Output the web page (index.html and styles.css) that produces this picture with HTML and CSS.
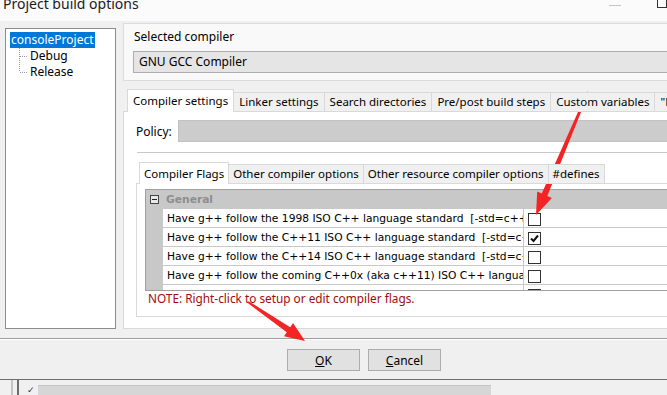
FILE: index.html
```html
<!DOCTYPE html>
<html lang="en">

<head>
    <meta charset="UTF-8">
    <meta name="viewport" content="width=device-width, initial-scale=1.0">
    <link rel="stylesheet" href="styles.css">
    <title>Project build options</title>
</head>

<body>

    <div class="titlebar">
        <span class="title">Project build options</span>
        <span class="win-min"></span>
        <span class="win-max"></span>
    </div>

    <div class="dialog-body">
        <div class="tree">
            <span class="tree-root">consoleProject</span>
            <div class="tree-children">
                <svg class="tree-lines" width="20" height="33" viewBox="0 0 20 33">
                    <path d="M9.5 0 V24 M10 8.5 H18 M10 24.5 H18" stroke="#9a9a9a" stroke-width="1" stroke-dasharray="1 1" fill="none"/>
                </svg>
                <div>
                    <div class="tree-child">Debug</div>
                    <div class="tree-child">Release</div>
                </div>
            </div>
        </div>

        <div class="right">
            <div class="compiler-box">
                <div class="box-label">Selected compiler</div>
                <div class="combo">GNU GCC Compiler</div>
            </div>

            <div class="notebook">
                <div class="tabs">
                    <div class="tab active">Compiler settings</div>
                    <div class="tab">Linker settings</div>
                    <div class="tab">Search directories</div>
                    <div class="tab">Pre/post build steps</div>
                    <div class="tab">Custom variables</div>
                    <div class="tab">"Make" commands</div>
                </div>
                <div class="page">
                    <div class="policy-row">
                        <span class="policy-label">Policy:</span>
                        <div class="policy-combo"></div>
                    </div>
                    <div class="sep"></div>

                    <div class="inner-notebook">
                        <div class="tabs inner">
                            <div class="tab active">Compiler Flags</div>
                            <div class="tab">Other compiler options</div>
                            <div class="tab">Other resource compiler options</div>
                            <div class="tab">#defines</div>
                        </div>
                        <div class="inner-page">
                            <div class="grid">
                                <div class="grid-cat">
                                    <svg width="9" height="9" viewBox="0 0 9 9">
                                        <rect x="0.5" y="0.5" width="8" height="8" fill="#e8e8e8" stroke="#444"/>
                                        <path d="M2 4.5 H7" stroke="#222" stroke-width="1"/>
                                    </svg>
                                    <span class="cat-label">General</span>
                                </div>
                                <div class="grid-row">
                                    <div class="gutter"></div>
                                    <div class="name">Have g++ follow the 1998 ISO C++ language standard  [-std=c++98]</div>
                                    <div class="value"><span class="check"></span></div>
                                </div>
                                <div class="grid-row">
                                    <div class="gutter"></div>
                                    <div class="name">Have g++ follow the C++11 ISO C++ language standard  [-std=c++11]</div>
                                    <div class="value">
                                        <span class="check">
                                            <svg width="11" height="11" viewBox="0 0 11 11">
                                                <path d="M2 5.5 L4.5 8 L9 2.5" stroke="#111" stroke-width="2" fill="none"/>
                                            </svg>
                                        </span>
                                    </div>
                                </div>
                                <div class="grid-row">
                                    <div class="gutter"></div>
                                    <div class="name">Have g++ follow the C++14 ISO C++ language standard  [-std=c++14]</div>
                                    <div class="value"><span class="check"></span></div>
                                </div>
                                <div class="grid-row">
                                    <div class="gutter"></div>
                                    <div class="name">Have g++ follow the coming C++0x (aka c++11) ISO C++ language standard</div>
                                    <div class="value"><span class="check"></span></div>
                                </div>
                                <div class="grid-row">
                                    <div class="gutter"></div>
                                    <div class="name"></div>
                                    <div class="value"><span class="check"></span></div>
                                </div>
                            </div>
                            <div class="note">NOTE: Right-click to setup or edit compiler flags.</div>
                        </div>
                    </div>
                </div>
            </div>
        </div>
    </div>

    <div class="footer">
        <div class="btn"><u>O</u>K</div>
        <div class="btn"><u>C</u>ancel</div>
    </div>

    <div class="ide">
        <span class="ide-line light"></span>
        <span class="ide-line dark"></span>
        <span class="ide-check">&#10003;</span>
        <span class="ide-bar"></span>
    </div>

    <!-- red arrows drawn over the screenshot -->
    <svg class="arrows" width="667" height="395" viewBox="0 0 667 395">
        <polygon points="588.9,92.4 547.3,195.9 551.9,197.9 536,215 537.2,191.6 541.8,193.6 587.1,91.6" fill="#f22424"/>
        <polygon points="247.4,302.8 286.8,332.2 284,336.3 305,341 293,323.1 290.2,327.2 248.6,301.2" fill="#f22424"/>
    </svg>

</body>

</html>
```

FILE: styles.css
```css
* {
    box-sizing: border-box;
}

body {
    margin: 0;
    width: 667px;
    height: 395px;
    overflow: hidden;
    position: relative;
    background: #f0f0f0;
    font-family: 'Noto Sans', 'Liberation Sans', sans-serif;
    font-size: 11.5px;
    color: #000;
}

.titlebar {
    height: 21px;
    background: #fbfbfb;
    display: flex;
    align-items: flex-start;
    padding-left: 3px;
}

.title {
    font-size: 14px;
    line-height: 14px;
    margin-top: -3px;
    color: #1a1a1a;
}

.win-min {
    width: 12px;
    height: 1px;
    background: #c4c4c4;
    margin: 5px 0 0 auto;
}

.win-max {
    width: 10px;
    height: 10px;
    border: 1px solid #333;
    margin: -2px 0 0 36px;
    flex-shrink: 0;
}

.dialog-body {
    height: 308px;
    display: flex;
    align-items: flex-start;
    gap: 7px;
    padding: 2px 0 0 5px;
}

.tree {
    width: 111px;
    height: 301px;
    flex-shrink: 0;
    margin-top: 5px;
    background: #fff;
    border: 1px solid #8c8c8c;
    padding: 2px 0 0 4px;
    font-size: 12px;
}

.tree-root {
    display: inline-block;
    background: #0078d7;
    color: #fff;
    line-height: 16px;
    padding: 0 1px;
}

.tree-children {
    display: flex;
}

.tree-lines {
    flex-shrink: 0;
}

.tree-child {
    line-height: 16px;
}

.right {
    width: 560px;
    flex-shrink: 0;
}

.compiler-box {
    background: #f9f9f9;
    border: 1px solid #dcdcdc;
    padding: 5px 0 7px 9px;
    font-size: 12px;
}

.box-label {
    line-height: 16px;
    padding-left: 1px;
}

.combo {
    margin-top: 6px;
    height: 22px;
    background: #e5e5e5;
    border: 1px solid #adadad;
    line-height: 20px;
    padding-left: 5px;
}

.notebook {
    margin-top: 8px;
}

.tabs {
    display: flex;
    align-items: flex-end;
    height: 23px;
    padding-left: 4px;
    margin-bottom: -1px;
    position: relative;
    z-index: 1;
}

.tab {
    height: 20px;
    line-height: 18px;
    padding: 0 5px;
    margin-left: -1px;
    background: #f0f0f0;
    border: 1px solid #d9d9d9;
    white-space: nowrap;
}

.tab.active {
    height: 23px;
    line-height: 22px;
    margin-left: 0;
    background: #fff;
    border-bottom: none;
}

.tabs.inner {
    height: 22px;
    padding-left: 3px;
}

.tabs.inner .tab {
    padding: 0 4px;
}

.tabs.inner .tab.active {
    height: 22px;
    line-height: 21px;
}

.page {
    height: 218px;
    background: #fff;
    border: 1px solid #d9d9d9;
    padding: 8px 0 0 12px;
}

.policy-row {
    display: flex;
    align-items: center;
    height: 22px;
}

.policy-label {
    width: 42px;
    font-size: 12px;
}

.policy-combo {
    flex: 1;
    height: 22px;
    background: #cccccc;
    border: 1px solid #c2c2c2;
}

.sep {
    margin: 10px 0 0 1px;
    border-top: 1px solid #c8c8c8;
}

.inner-notebook {
    margin-top: 9px;
}

.inner-page {
    height: 134px;
    background: #fff;
    border: 1px solid #d9d9d9;
    padding: 5px 0 0 8px;
}

.grid {
    height: 102px;
    overflow: hidden;
    border: 1px solid #a0a0a0;
    font-family: 'DejaVu Sans', sans-serif;
    font-size: 10.7px;
}

.grid-cat {
    height: 19px;
    background: #c8c8c8;
    display: flex;
    align-items: center;
    padding-left: 4px;
}

.cat-label {
    margin-left: 7px;
    font-weight: bold;
    color: #8e8e8e;
}

.grid-row {
    display: flex;
    height: 19px;
    flex-shrink: 0;
    border-bottom: 1px solid #c8c8c8;
}

.gutter {
    width: 17px;
    flex-shrink: 0;
    background: #c8c8c8;
}

.name {
    width: 361px;
    flex-shrink: 0;
    padding-left: 4px;
    line-height: 19px;
    white-space: pre;
    overflow: hidden;
    border-right: 1px solid #c8c8c8;
}

.value {
    padding: 4px 0 0 4px;
}

.check {
    display: flex;
    align-items: center;
    justify-content: center;
    width: 13px;
    height: 13px;
    background: #fff;
    border: 1px solid #333;
}

.note {
    margin-left: 3px;
    line-height: 14px;
    color: #a00c0c;
    font-size: 11.8px;
}

.footer {
    margin-top: 9px;
    border-top: 1px solid #a0a0a0;
    border-bottom: 1px solid #6e6e6e;
    box-shadow: inset 0 1px #fff;
    display: flex;
    gap: 8px;
    padding: 10px 0 8px 287px;
    font-size: 12px;
}

.btn {
    width: 73px;
    height: 22px;
    display: flex;
    align-items: center;
    justify-content: center;
    background: #e1e1e1;
    border: 1px solid #adadad;
}

.ide {
    height: 15px;
    display: flex;
    padding-left: 11px;
}

.ide-line {
    width: 2px;
}

.ide-line.light {
    background: #c4c4c4;
}

.ide-line.dark {
    background: #6d6d6d;
    margin-left: 4px;
}

.ide-check {
    width: 19px;
    padding: 4px 0 0 8px;
    font-size: 9px;
    line-height: 11px;
    color: #333;
}

.ide-bar {
    width: 453px;
    margin-top: 5px;
    background: #d6d6d6;
    border-top: 1px solid #c4c4c4;
}

.arrows {
    position: absolute;
    left: 0;
    top: 0;
    pointer-events: none;
}
```
